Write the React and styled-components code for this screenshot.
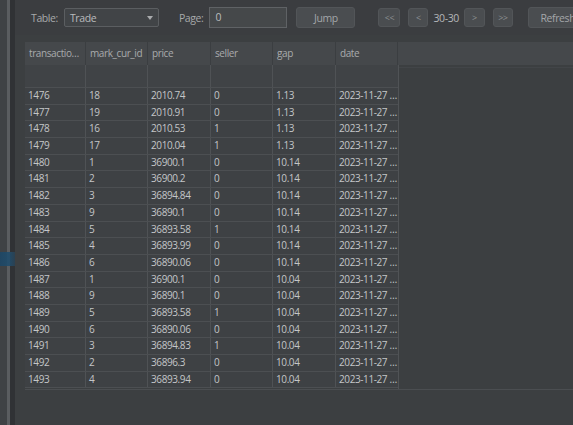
import React from "react";
import styled, { createGlobalStyle } from "styled-components";

const GlobalStyle = createGlobalStyle`
  html, body {
    margin: 0;
    padding: 0;
    background: #3c3f41;
    overflow: hidden;
  }
  body {
    font-family: "Open Sans", "Noto Sans", sans-serif;
    font-size: 10px;
    letter-spacing: -0.4px;
    color: #bcbec0;
  }
`;

const rows = [
  [1476, 18, "2010.74", 0, "1.13"],
  [1477, 19, "2010.91", 0, "1.13"],
  [1478, 16, "2010.53", 1, "1.13"],
  [1479, 17, "2010.04", 1, "1.13"],
  [1480, 1, "36900.1", 0, "10.14"],
  [1481, 2, "36900.2", 0, "10.14"],
  [1482, 3, "36894.84", 0, "10.14"],
  [1483, 9, "36890.1", 0, "10.14"],
  [1484, 5, "36893.58", 1, "10.14"],
  [1485, 4, "36893.99", 0, "10.14"],
  [1486, 6, "36890.06", 0, "10.14"],
  [1487, 1, "36900.1", 0, "10.04"],
  [1488, 9, "36890.1", 0, "10.04"],
  [1489, 5, "36893.58", 1, "10.04"],
  [1490, 6, "36890.06", 0, "10.04"],
  [1491, 3, "36894.83", 1, "10.04"],
  [1492, 2, "36896.3", 0, "10.04"],
  [1493, 4, "36893.94", 0, "10.04"],
];

const columns = ["transaction_id", "mark_cur_id", "price", "seller", "gap", "date"];
const COLS = "61px 62px 63px 62px 63px 62px";

const Page = styled.div`
  display: flex;
  height: 425px;
  width: 573px;
  overflow: hidden;
`;

const Rail = styled.div`
  position: relative;
  display: flex;
  flex: 0 0 15px;
`;

const RailOuter = styled.div`
  width: 7px;
  background: #3f4245;
`;

const RailLine = styled.div`
  width: 3px;
  background: #5a5d60;
`;

const RailInner = styled.div`
  width: 5px;
  background: #303235;
`;

const RailMarker = styled.div`
  position: absolute;
  left: 0;
  top: 252px;
  width: 15px;
  height: 14px;
  background: linear-gradient(90deg, #1d4766 0%, #204d6d 60%, #2a4254 100%);
  opacity: 0.9;
`;

const Main = styled.div`
  flex: 1;
  display: flex;
  flex-direction: column;
  min-width: 0;
`;

const Toolbar = styled.div`
  display: flex;
  align-items: center;
  height: 35px;
  padding-left: 16px;
  white-space: nowrap;
  font-size: 10.5px;
  background: #3b3d40;
  & > * {
    flex-shrink: 0;
  }
`;

const Label = styled.span`
  color: #a7a9ab;
  margin-left: ${(p) => p.$ml || 0}px;
`;

const Combo = styled.div`
  display: flex;
  align-items: center;
  justify-content: space-between;
  box-sizing: border-box;
  width: 95px;
  height: 19px;
  margin-left: 6px;
  padding: 0 5px 0 5px;
  background: #414447;
  border: 1px solid #5b5e61;
  border-radius: 2px;
  color: #b9bbbd;
`;

const Caret = styled.span`
  width: 0;
  height: 0;
  border-left: 3.5px solid transparent;
  border-right: 3.5px solid transparent;
  border-top: 4px solid #a9abad;
`;

const Field = styled.div`
  box-sizing: border-box;
  width: 78px;
  height: 21px;
  margin-left: 6px;
  padding-left: 5px;
  line-height: 19px;
  background: #45484a;
  border: 1px solid #5f6265;
  color: #b9bbbd;
`;

const Button = styled.div`
  box-sizing: border-box;
  display: flex;
  align-items: center;
  justify-content: center;
  width: ${(p) => p.$w}px;
  height: ${(p) => p.$h || 19}px;
  margin-left: ${(p) => p.$ml}px;
  background: #4a4d50;
  border: 1px solid #525558;
  border-radius: 3px;
  color: ${(p) => (p.$dim ? "#8c8f92" : "#a3a6a9")};
  font-size: ${(p) => (p.$dim ? 9 : 10.5)}px;
`;

const PageInfo = styled.span`
  margin-left: 5px;
  color: #b4b6b8;
`;

const Grid = styled.div`
  margin-top: 7px;
  margin-left: 10px;
  display: flex;
  flex-direction: column;
  height: 347px;
  border-bottom: 1px solid #4b4e51;
`;

const HeaderRow = styled.div`
  display: grid;
  grid-template-columns: ${COLS} 1fr;
  height: 23px;
  background: #45484b;
`;

const HeadCell = styled.div`
  box-sizing: border-box;
  padding-left: 4px;
  line-height: 23px;
  color: #a9abad;
  border-right: ${(p) => (p.$last ? "none" : "1px solid #3b3e41")};
  white-space: nowrap;
  overflow: hidden;
  text-overflow: ellipsis;
`;

const Body = styled.div`
  display: flex;
  flex: 1;
`;

const Rows = styled.div`
  display: flex;
  flex-direction: column;
  border-right: 1px solid #505356;
`;

const Row = styled.div`
  display: grid;
  grid-template-columns: ${COLS};
  height: ${(p) => p.$h}px;
  box-sizing: border-box;
  background: ${(p) => (p.$blank ? "#404346" : "#3e4144")};
  border-bottom: 1px solid #4c4f52;
`;

const Cell = styled.div`
  box-sizing: border-box;
  padding-left: 3px;
  line-height: 15.7px;
  color: #c4c6c8;
  border-right: 1px solid #4f5255;
  white-space: nowrap;
  overflow: hidden;
  text-overflow: ellipsis;
  &:last-child {
    border-right: none;
  }
`;

const Viewport = styled.div`
  flex: 1;
  background: #3c3f41;
  border-top: 1px solid #424548;
  margin-top: 2px;
`;

export default function App() {
  return (
    <>
      <GlobalStyle />
      <Page>
        <Rail>
          <RailOuter />
          <RailLine />
          <RailInner />
          <RailMarker />
        </Rail>
        <Main>
          <Toolbar>
            <Label>Table:</Label>
            <Combo>
              <span>Trade</span>
              <Caret />
            </Combo>
            <Label $ml={20}>Page:</Label>
            <Field>0</Field>
            <Button $w={59} $h={21} $ml={9}>Jump</Button>
            <Button $w={22} $ml={23} $dim>&lt;&lt;</Button>
            <Button $w={20} $ml={8} $dim>&lt;</Button>
            <PageInfo>30-30</PageInfo>
            <Button $w={21} $ml={5} $dim>&gt;</Button>
            <Button $w={20} $ml={8} $dim>&gt;&gt;</Button>
            <Button $w={60} $h={21} $ml={15}>Refresh</Button>
          </Toolbar>
          <Grid>
            <HeaderRow>
              {columns.map((c) => (
                <HeadCell key={c}>{c}</HeadCell>
              ))}
              <HeadCell $last />
            </HeaderRow>
            <Body>
              <Rows>
                <Row $h={23} $blank>
                  {columns.map((c) => (
                    <Cell key={c} />
                  ))}
                </Row>
                {rows.map((r) => (
                  <Row key={r[0]} $h={16.7}>
                    {r.map((v, i) => (
                      <Cell key={i}>{v}</Cell>
                    ))}
                    <Cell>2023-11-27 10:21:45</Cell>
                  </Row>
                ))}
              </Rows>
              <Viewport />
            </Body>
          </Grid>
        </Main>
      </Page>
    </>
  );
}
